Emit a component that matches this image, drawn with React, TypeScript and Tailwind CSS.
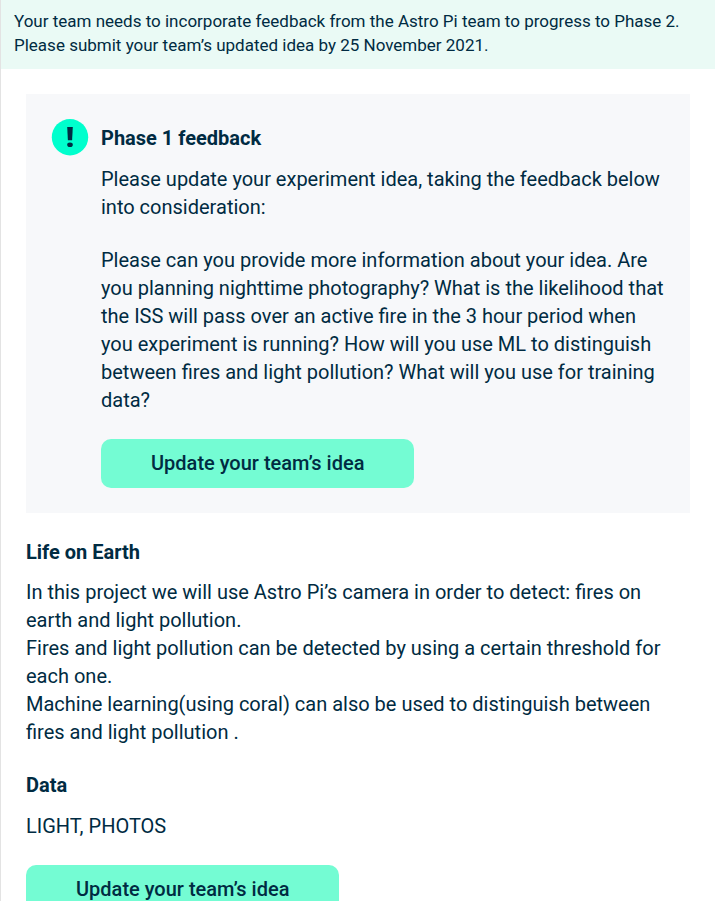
import React from "react";

interface FeedbackPanelProps {
  title: string;
  children: React.ReactNode;
}

function AlertIcon() {
  return (
    <svg
      aria-hidden
      viewBox="0 0 37 37"
      className="size-[37px] shrink-0 overflow-visible"
    >
      <circle cx="19" cy="18.2" r="18.2" fill="#00ffcd" />
      <path d="M16.2 8h5.6l-.7 13.2h-4.2z" fill="#002b42" />
      <ellipse cx="19" cy="25.8" rx="2.8" ry="2.3" fill="#002b42" />
    </svg>
  );
}

function UpdateIdeaButton() {
  return (
    <button
      type="button"
      className="h-[49px] cursor-pointer rounded-[10px] bg-[#74fcd3] px-[50px] pb-0.5 text-[20px] font-medium"
    >
      Update your team’s idea
    </button>
  );
}

function FeedbackPanel({ title, children }: FeedbackPanelProps) {
  return (
    <section className="flex gap-[13px] bg-[#f7f8fa] p-[25px]">
      <AlertIcon />
      <div className="min-w-0 flex-1">
        <h2 className="pt-[5px] font-bold">{title}</h2>
        {children}
      </div>
    </section>
  );
}

export default function App() {
  return (
    <div className="min-h-screen border-l border-[#e3e3e3] bg-white font-[Roboto,sans-serif] text-[20px] leading-[28px] text-[#002b42]">
      <div
        role="status"
        className="bg-[#eafaf5] px-[13px] pt-[9px] pb-3 text-[17px] leading-6"
      >
        <p>
          Your team needs to incorporate feedback from the Astro Pi team to
          progress to Phase 2. Please submit your team’s updated idea by 25
          November 2021.
        </p>
      </div>

      <main className="px-[25px] pt-[25px]">
        <FeedbackPanel title="Phase 1 feedback">
          <p className="mt-[13px]">
            Please update your experiment idea, taking the feedback below into
            consideration:
          </p>
          <p className="mt-[25px]">
            Please can you provide more information about your idea. Are you
            planning nighttime photography? What is the likelihood that the ISS
            will pass over an active fire in the 3 hour period when you
            experiment is running? How will you use ML to distinguish between
            fires and light pollution? What will you use for training data?
          </p>
          <div className="mt-[25px] flex">
            <UpdateIdeaButton />
          </div>
        </FeedbackPanel>

        <section className="mt-[25px]">
          <h2 className="font-bold">Life on Earth</h2>
          <p className="mt-3">
            In this project we will use Astro Pi’s camera in order to detect:
            fires on earth and light pollution.
            <br />
            Fires and light pollution can be detected by using a certain
            threshold for each one.
            <br />
            Machine learning(using coral) can also be used to distinguish
            between fires and light pollution .
          </p>
        </section>

        <section className="mt-[25px]">
          <h2 className="font-bold">Data</h2>
          <p className="mt-[13px]">LIGHT, PHOTOS</p>
        </section>

        <div className="mt-[25px] flex">
          <UpdateIdeaButton />
        </div>
      </main>
    </div>
  );
}
